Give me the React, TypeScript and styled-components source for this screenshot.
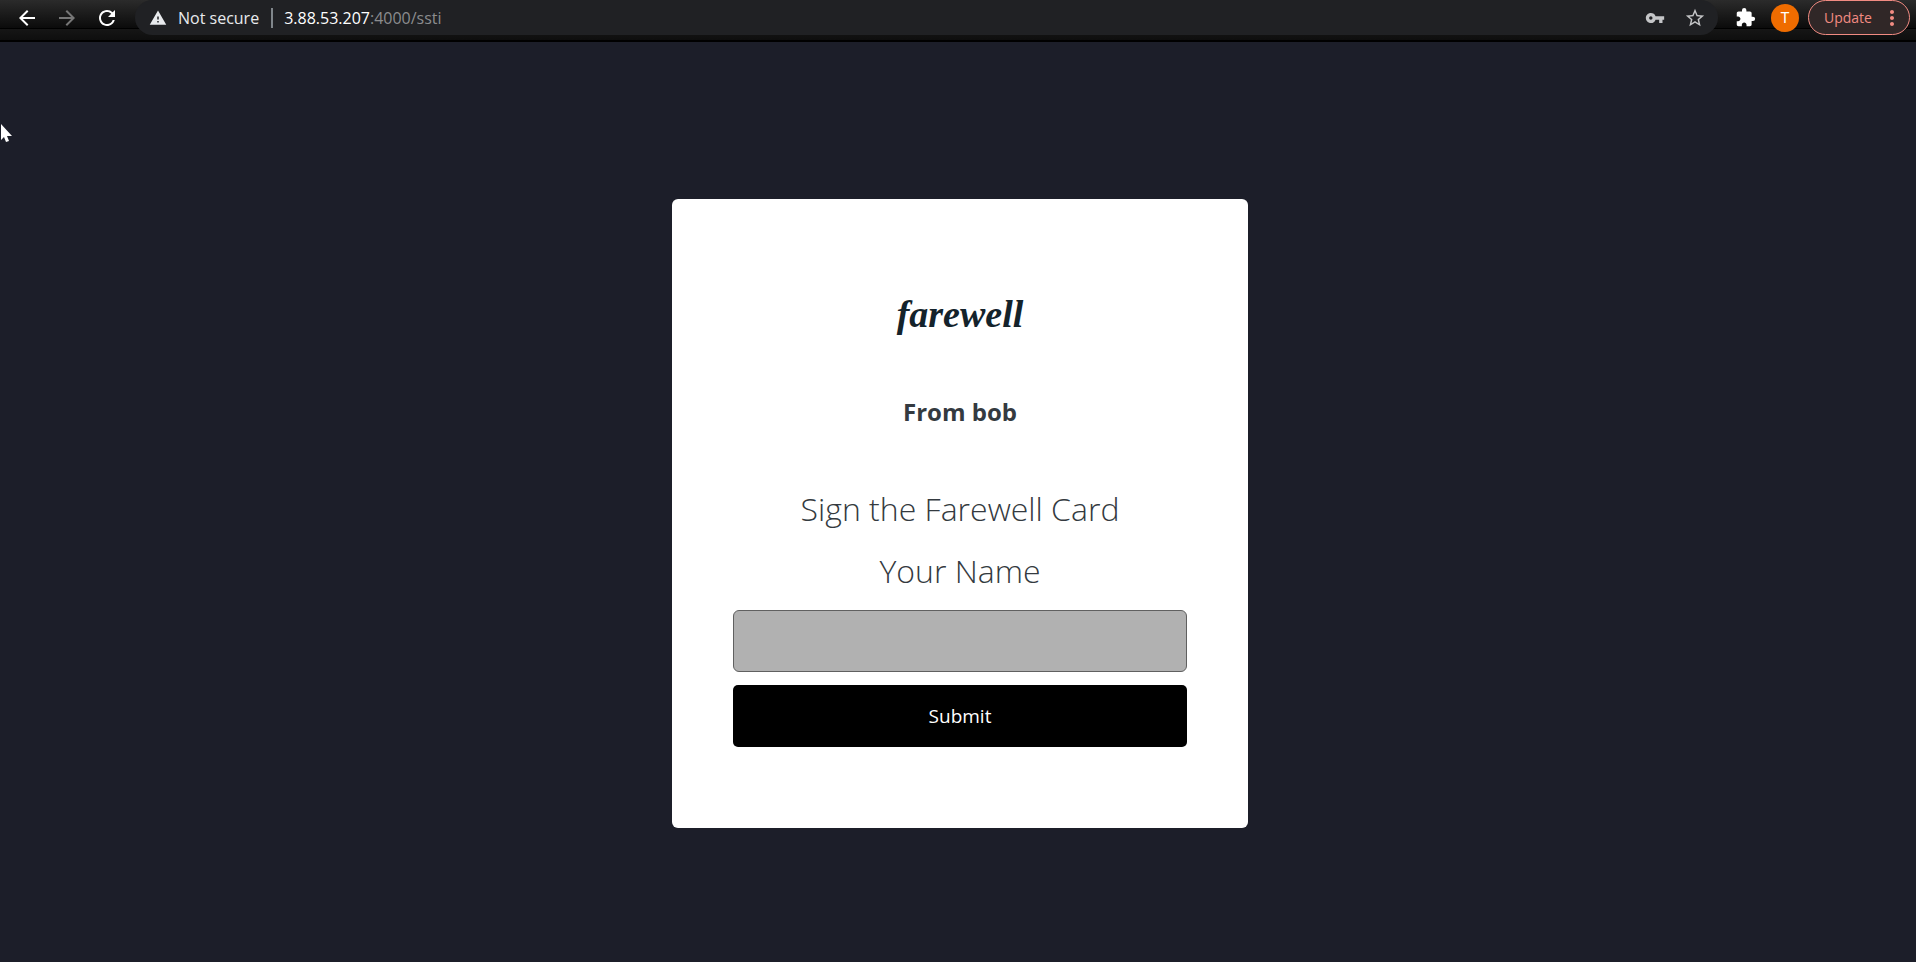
import React from 'react';
import styled, { createGlobalStyle } from 'styled-components';
import {
  MdArrowBack,
  MdArrowForward,
  MdExtension,
  MdMoreVert,
  MdRefresh,
  MdStarBorder,
  MdVpnKey,
  MdWarning,
} from 'react-icons/md';

const GlobalStyle = createGlobalStyle`
  *, *::before, *::after { box-sizing: border-box; }
  body {
    margin: 0;
    background: #1c1e29;
    color: #343a40;
    font-family: "Segoe UI", "Open Sans", "Noto Sans", sans-serif;
  }
`;

const Shell = styled.div`
  display: flex;
  flex-direction: column;
  min-height: 100vh;
`;

const Toolbar = styled.header`
  display: flex;
  align-items: flex-start;
  height: 42px;
  padding: 0 6px 0 7px;
  border-bottom: 2px solid #000;
  background: linear-gradient(#2b2b2b, #0b0b0b 28px, #000 28px, #000 29px, #161616 29px, #0e0e0e);
`;

const NavButtons = styled.nav`
  display: flex;
  margin-right: 8px;
`;

const IconButton = styled.button<{ $color?: string; $size?: number }>`
  display: flex;
  align-items: center;
  justify-content: center;
  width: 40px;
  height: 35px;
  padding: 0;
  border: 0;
  background: none;
  color: ${({ $color = '#fff' }) => $color};

  svg {
    width: ${({ $size = 24 }) => $size}px;
    height: ${({ $size = 24 }) => $size}px;
  }
`;

const AddressBar = styled.div`
  display: flex;
  flex: 1;
  align-items: center;
  height: 35px;
  padding: 0 3px 0 14px;
  border-radius: 18px;
  background: #202124;
  font-size: 16px;
  line-height: 24px;
  color: #e8eaed;
`;

const Warning = styled(MdWarning)`
  width: 18px;
  height: 18px;
  margin-right: 11px;
`;

const Divider = styled.span`
  width: 2px;
  height: 20px;
  margin: 0 11px 0 12px;
  background: #80868b;
`;

const Url = styled.span`
  flex: 1;
  color: #8b8c8e;
`;

const Host = styled.span`
  color: #fff;
`;

const Actions = styled.div`
  display: flex;
  align-items: center;
  height: 35px;
  padding-left: 7px;
`;

const Avatar = styled.button`
  width: 28px;
  height: 28px;
  margin: 0 9px 0 6px;
  padding: 0;
  border: 0;
  border-radius: 50%;
  background: #ef6c00;
  color: #fff;
  font: 15px/28px Roboto, sans-serif;
`;

const UpdateButton = styled.button`
  display: flex;
  align-items: center;
  justify-content: space-between;
  width: 102px;
  height: 35px;
  padding: 0 5px 0 15px;
  border: 1px solid #f28b82;
  border-radius: 18px;
  background: #302727;
  color: #f28b82;
  font-family: inherit;
  font-size: 14px;
  line-height: 20px;

  svg {
    width: 24px;
    height: 24px;
  }
`;

const Page = styled.main`
  display: flex;
  flex: 1;
  align-items: center;
  justify-content: center;
  padding: 22px 0 0 4px;
`;

const Card = styled.form`
  display: flex;
  flex-direction: column;
  align-items: stretch;
  width: 576px;
  max-width: 100%;
  padding: 87px 61px 81px;
  border-radius: 6px;
  background: #fff;
  text-align: center;
`;

const Wordmark = styled.div`
  color: #14232b;
  font-family: "Liberation Serif", serif;
  font-size: 38px;
  font-style: italic;
  font-weight: 700;
  line-height: 56px;
`;

const Sender = styled.h1`
  margin: 52px 0;
  font-size: 24px;
  font-weight: 700;
  line-height: 36px;
`;

const Title = styled.h2`
  margin: 0 0 8px;
  font-size: 32px;
  font-weight: 300;
  line-height: 54px;
`;

const NameLabel = styled.label`
  margin-bottom: 12px;
  font-size: 32px;
  font-weight: 300;
  line-height: 54px;
`;

const NameInput = styled.input`
  height: 62px;
  margin-bottom: 13px;
  padding: 0 16px;
  border: 1px solid #606060;
  border-radius: 6px;
  background: #b1b1b1;
  font: inherit;
  font-size: 19px;
`;

const SubmitButton = styled.button`
  height: 62px;
  border: 0;
  border-radius: 5px;
  background: #000;
  color: #fff;
  font-family: inherit;
  font-size: 19px;
  line-height: 30px;
`;

/* The pointer floats over the page. */
const Pointer = styled.svg`
  position: absolute;
  top: 123px;
  left: 0;
  width: 13px;
  height: 20px;
`;

export default function App() {
  return (
    <>
      <GlobalStyle />
      <Shell>
        <Toolbar>
          <NavButtons>
            <IconButton aria-label="Back"><MdArrowBack /></IconButton>
            <IconButton aria-label="Forward" $color="#777"><MdArrowForward /></IconButton>
            <IconButton aria-label="Reload"><MdRefresh /></IconButton>
          </NavButtons>
          <AddressBar>
            <Warning />
            <span>Not secure</span>
            <Divider />
            <Url><Host>3.88.53.207</Host>:4000/ssti</Url>
            <IconButton aria-label="Passwords" $color="#c4c5c7" $size={20}><MdVpnKey /></IconButton>
            <IconButton aria-label="Bookmark" $color="#c4c5c7" $size={22}><MdStarBorder /></IconButton>
          </AddressBar>
          <Actions>
            <IconButton aria-label="Extensions" $size={21}><MdExtension /></IconButton>
            <Avatar type="button">T</Avatar>
            <UpdateButton type="button">Update<MdMoreVert /></UpdateButton>
          </Actions>
        </Toolbar>
        <Page>
          <Card onSubmit={(event: React.FormEvent) => event.preventDefault()}>
            <Wordmark>farewell</Wordmark>
            <Sender>From bob</Sender>
            <Title>Sign the Farewell Card</Title>
            <NameLabel htmlFor="name">Your Name</NameLabel>
            <NameInput id="name" name="name" type="text" />
            <SubmitButton type="submit">Submit</SubmitButton>
          </Card>
        </Page>
      </Shell>
      <Pointer viewBox="0 0 13 20" aria-hidden="true">
        <path d="M1 1L12 13H7L9 18L6 19L4 14L1 17Z" fill="#fff" />
      </Pointer>
    </>
  );
}
